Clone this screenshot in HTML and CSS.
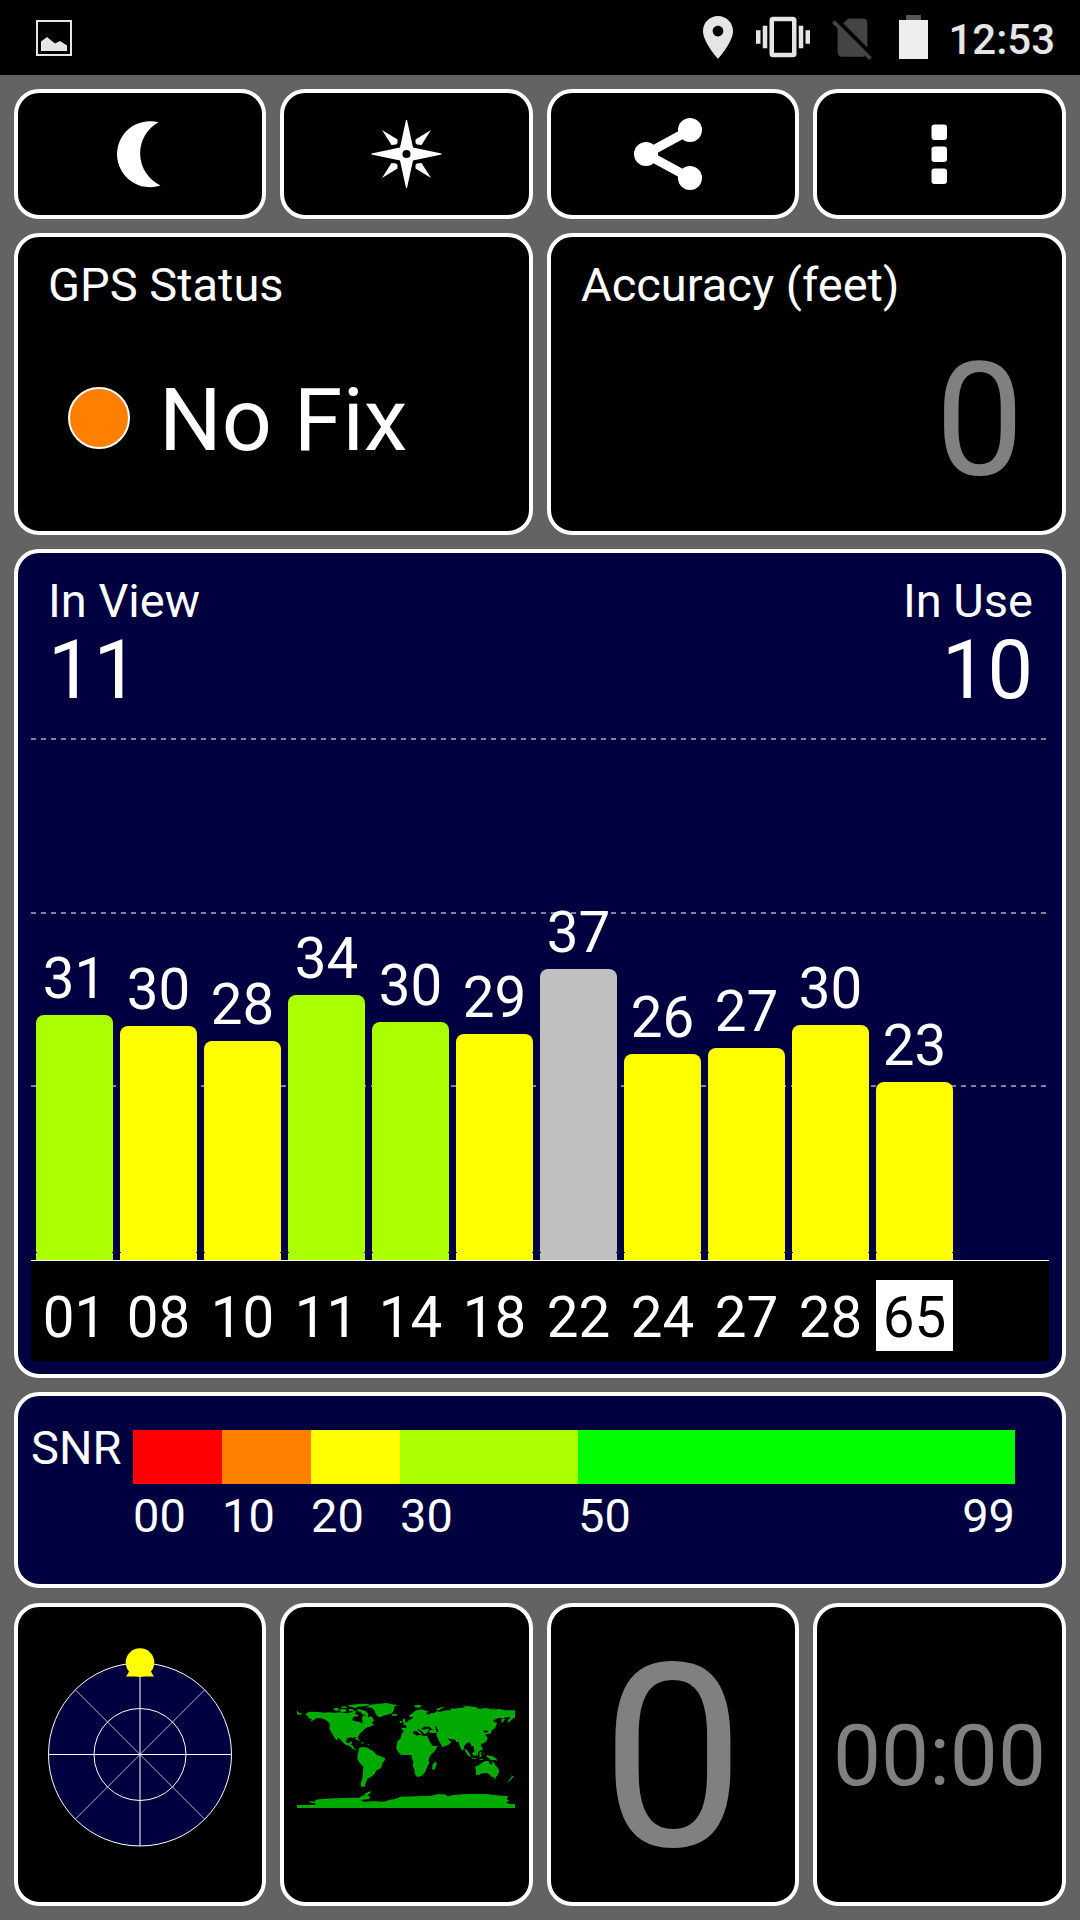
FILE: index.html
```html
<!DOCTYPE html>
<html lang="en">
<head>
    <meta charset="UTF-8">
    <meta name="viewport" content="width=device-width, initial-scale=1.0">
    <title>GPS Test</title>
    <link rel="stylesheet" href="styles.css">
</head>
<body>

    <div class="status-bar">
        <svg class="icon-image" viewBox="0 0 36 36">
            <path d="M1 1h34v34H1z" fill="none" stroke="#e5e5e5" stroke-width="2"/>
            <path d="M5 31V21.500L11 17L19 23.500L24 21L31 25.500V31z" fill="#e5e5e5"/>
        </svg>
        <div class="status-icons">
            <svg class="icon-pin" viewBox="5 2 14 20">
                <path d="M12 2C8.130 2 5 5.130 5 9c0 5.250 7 13 7 13s7-7.750 7-13c0-3.870-3.130-7-7-7zm0 9.500c-1.380 0-2.500-1.120-2.500-2.500s1.120-2.500 2.500-2.500 2.500 1.120 2.500 2.500-1.120 2.500-2.500 2.500z"/>
            </svg>
            <svg class="icon-vibrate" viewBox="0 0 24 24">
                <path d="M0 15h2V9H0v6zm3 2h2V7H3v10zm19-8v6h2V9h-2zm-3 8h2V7h-2v10zM16.500 3h-9C6.670 3 6 3.670 6 4.500v15c0 .83.67 1.500 1.500 1.500h9c.83 0 1.500-.67 1.500-1.500v-15c0-.83-.67-1.500-1.500-1.500zM16 19H8V5h8v14z"/>
            </svg>
            <svg class="icon-sim" viewBox="0 0 24 24">
                <path d="M18.990 5c0-1.100-.89-2-1.990-2h-7L7.660 5.340 19 16.680 18.990 5zM3.650 3.880L2.380 5.150 5 7.770V19c0 1.100.9 2 2 2h10.010c.35 0 .67-.1.96-.26l1.880 1.880 1.270-1.270L3.650 3.880z"/>
            </svg>
            <svg class="icon-battery" viewBox="0 0 29 44">
                <path d="M7 0h15v6H7z" fill="#555"/>
                <path d="M0 5h29v39H0z" fill="#eee"/>
            </svg>
            <span class="clock">12:53</span>
        </div>
    </div>

    <div class="screen">
        <!-- Toolbar -->
        <button class="panel tool">
            <svg viewBox="0 0 80 80">
                <path d="M58.500 8.300A33 33 0 1 0 60.500 71.500A35.500 35.500 0 0 1 58.500 8.300z"/>
            </svg>
        </button>
        <button class="panel tool">
            <svg viewBox="0 0 80 80">
                <path fill-rule="evenodd" d="M39 6h1L46 33.500L74.500 39.500v1L46 46.500L40 74h-1L33 46.500L4.500 40.500v-1L33 33.500zM39.500 36a4 4 0 1 0 0 8a4 4 0 1 0 0-8z"/>
                <path d="M15 16L30.500 25.500V29L29 30.500L24.500 31zM64 16L48.500 25.500V29L50 30.500L54.500 31zM15 64L30.500 54.500V51L29 49.500L24.500 49zM64 64L48.500 54.500V51L50 49.500L54.500 49z"/>
            </svg>
        </button>
        <button class="panel tool">
            <svg viewBox="0 0 80 80">
                <path d="M57 16L13 40L57 64" fill="none" stroke="#fff" stroke-width="9"/>
                <circle cx="57" cy="16" r="12"/>
                <circle cx="13" cy="40" r="12"/>
                <circle cx="57" cy="64" r="12"/>
            </svg>
        </button>
        <button class="panel tool">
            <svg viewBox="0 0 80 80">
                <rect x="31.500" y="10.500" width="15.500" height="15.500" rx="3"/>
                <rect x="31.500" y="32.500" width="15.500" height="15.500" rx="3"/>
                <rect x="31.500" y="54.500" width="15.500" height="15.500" rx="3"/>
            </svg>
        </button>

        <!-- Fix and accuracy -->
        <div class="panel half">
            <div class="label">GPS Status</div>
            <div class="fix">
                <span class="led"></span>
                <span class="fix-text">No Fix</span>
            </div>
        </div>
        <div class="panel half">
            <div class="label">Accuracy (feet)</div>
            <div class="accuracy">0</div>
        </div>

        <!-- Satellites -->
        <div class="panel full chart">
            <div class="counts">
                <div>
                    <div class="label">In View</div>
                    <div class="count">11</div>
                </div>
                <div class="right">
                    <div class="label">In Use</div>
                    <div class="count">10</div>
                </div>
            </div>
            <div class="plot">
                <div class="sat"><span>31</span><div class="bar lime" style="height: 245px"></div></div>
                <div class="sat"><span>30</span><div class="bar yellow" style="height: 234px"></div></div>
                <div class="sat"><span>28</span><div class="bar yellow" style="height: 219px"></div></div>
                <div class="sat"><span>34</span><div class="bar lime" style="height: 265px"></div></div>
                <div class="sat"><span>30</span><div class="bar lime" style="height: 238px"></div></div>
                <div class="sat"><span>29</span><div class="bar yellow" style="height: 226px"></div></div>
                <div class="sat"><span>37</span><div class="bar gray" style="height: 291px"></div></div>
                <div class="sat"><span>26</span><div class="bar yellow" style="height: 206px"></div></div>
                <div class="sat"><span>27</span><div class="bar yellow" style="height: 212px"></div></div>
                <div class="sat"><span>30</span><div class="bar yellow" style="height: 235px"></div></div>
                <div class="sat"><span>23</span><div class="bar yellow" style="height: 178px"></div></div>
            </div>
            <div class="ids">
                <span>01</span>
                <span>08</span>
                <span>10</span>
                <span>11</span>
                <span>14</span>
                <span>18</span>
                <span>22</span>
                <span>24</span>
                <span>27</span>
                <span>28</span>
                <span class="glonass">65</span>
            </div>
        </div>

        <!-- SNR legend -->
        <div class="panel full snr">
            <div class="snr-label">SNR</div>
            <div class="scale">
                <div class="step"><div class="swatch red"></div>00</div>
                <div class="step"><div class="swatch orange"></div>10</div>
                <div class="step"><div class="swatch yellow"></div>20</div>
                <div class="step"><div class="swatch lime"></div>30</div>
                <div class="step"><div class="swatch green"></div><div class="ends"><span>50</span><span>99</span></div></div>
            </div>
        </div>

        <!-- Page tiles -->
        <div class="panel tile">
            <svg class="sky" viewBox="0 0 200 221">
                <g fill="none" stroke="#fff">
                    <circle cx="100" cy="110.500" r="91.500" fill="#000040"/>
                    <circle cx="100" cy="110.500" r="46"/>
                    <path d="M8.500 110.500h183"/>
                    <path d="M100 19v183" stroke-opacity=".5" stroke-width="2"/>
                    <path d="M35.500 46L164.500 175M164.500 46L35.500 175" stroke-opacity=".7"/>
                </g>
                <circle cx="100" cy="18.500" r="14.300" fill="#ff0"/>
                <path d="M90 26L86 32.500h28L110 26z" fill="#ff0"/>
            </svg>
        </div>
        <div class="panel tile">
            <svg class="world" viewBox="51 69 654 315">
                <!-- Americas -->
                <path d="M51 91l4 6 13 4-8 3-9-1zM77 103l8-8 32 1 14 2 16-1 15 1 22-1 16 3 14-3 9-6 5 4-3 7 8 3-13 7-4 8 10 4 14 2 6 5 2-7-2-8 2-9 9-1 9 6 5-4 8 5 3 10-7 5-1 6 4 1-8 5-8 2-9 6-5 6-7 5-6 10-1 9-8-7-8 3-9-2-9 4-2 9 7 5 8-6 4 4-4 7 6 2 5 11 8 1-4 2-10-4-8-8-13-5-7-5-5-6-8-9-6 1 3 8-6-4-8-12-8-13-4-9 1-13-7-9-9-5-13-4-11 1-8 6-13 5 8-7-9-4z"/>
                <path d="M238 203L250 201L262 203L272 209L282 215L290 225L300 227L315 235L314 242L306 251L304 264L288 272L284 282L272 292L262 296L258 307L254 320L244 321L242 312L247 295L249 275L250 260L240 250L232 237L233 222z"/>
                <path d="M224 173l11 3 7 7-7-2-9-4zM243 186l11 3-9 2zM263 192h5v2h-5z"/>
                <!-- Canadian islands and Greenland -->
                <path d="M159 86l11-3 9 4-6 5-10-1zM177 90l12-4 11 3-2 6-15 1zM183 80l15-1 5 4-18 1zM205 76l30-4 25-1 12 3-13 4-24 2-10 5-8-4-12-2zM205 88l15-1-1 6-12 1zM230 88l10 0 18 5 7 9-1 8-8-4-11-5-2-5-10-2zM225 103l11 3-6 4-8-2zM274 127l6 5 1 5-8-2z"/>
                <path d="M258 82L272 74L290 72L320 69L336 73L353 75L343 80L341 92L336 100L320 104L308 108L300 112L292 109L286 100L283 90L274 83zM335 103l12-2 7 3-7 4-11-1zM401 77l14-3 12 3-5 3-5 4-10-2z"/>
                <!-- Europe and Asia -->
                <path d="M363 143l14 1 4-3-8-9 8-6 8-7 7-3 4-5-11 0-1-6 9-4 8-9 19-4 23 7-10 5 9 4 8-5 9 1 5-6 13 1 19-4 11 0 3-6 9 1 12-2 5 0 28-5 20 3 10 5 19-3 24 5 17-2 19 4 28 0 21 4v11l-18 3 7 1-15 5-11 10-7 4 3-9 6-8-7-1-16 4-13-1-15 7 1 4 10 3-3 11-6 9-12 3 4 9-7 2-5-10-12-1 3 6 8 3-5 4 7 10-3 9-9 7-9 2 3 9-1 9-10 6-4-7-4 2 7 10 2 8-10-9-3-10-1-12-6 1-5-11-6-1-12 11 0 8-5 7-7-12-4-16-7 1-3-7-14-2-10-3 10 11 3 1-10 9-14 5-4 1-5-10-7-12-2-6-4-7 2-8-11 1-13-1 1-7 12-3-9-3-6 6-3 7-8 5-8-8-10-8-4 1 11 10 4 6-8-3-9-8-8 0-6 5-2 7-11 2-5-2z"/>
                <path d="M369 116l5 0 3 11 5 5-14 3 4-6-4-3zM359 124l7-2-1 7-6 1zM468 88l16-6 13 0-14 4-9 6zM545 76l12 1 13 4-10 1zM633 86l16 0-10 3zM609 158l10 0 10-5 4-10 2-4 2 2-1 12-10 8-12 2zM632 124l5 9-1 6-3-6zM666 115l10 2-8 9-5 3zM661 128l-5 7-10 5 6-2z"/>
                <!-- Black and Caspian seas -->
                <path class="water" d="M424 146l8-6 16 0 6 6-14 1-12 2zM466 138l5 2-1 5 4 3 1 8-6-2-2-8z"/>
                <!-- Africa -->
                <path d="M367 157l10-1 22-1 2 7 11 5 6-3 15 4 8-1 5 11 7 13 5 7 12 0 3-1-7 14-11 12-7 8-2 10 2 9-6 8-5 15-6 9-6 6-13 3-7-8-2-15-4-11 1-13-4-8-2-10-8-2-10 1-13-1-8-7-6-11 1-14 3-8 9-9zM458 252l10-8 2 8-6 17-8-1z"/>
                <!-- South-east Asia and Oceania -->
                <path d="M553 205l8 6 8 10 4 10-8-4-8-10zM571 232l16 3 7 2-15-1zM576 219l6-3 10-9 4 5-4 12-11 4zM598 217l9-2-5 6 4 7-3 1-4 5zM597 189l5 2-1 8 7 5-1 9-8-6zM609 218l5 2-3 3zM620 224l9 3 10 2 10 7 3 6-9-2-11 1-7-8-5-3zM598 236l13 2-2 2-10-1z"/>
                <path d="M585 260L598 255L606 248L616 243L627 243L627 250L636 254L638 241L642 250L648 258L656 267L657 276L653 285L648 291L636 292L631 286L622 279L606 280L597 285L587 284L588 272zM641 291l7 1-4 7zM695 284l2 4 5 1-5 6-2 2-8 7-5 1 5-6 7-6z"/>
                <!-- Antarctica -->
                <path d="M51 375H103L108 370L96 369L84 362L103 365L108 359L125 357L160 355L190 354L215 353L238 353L246 347L257 345L251 342L272 333V339L262 346L269 348V357L242 360L254 366L272 364L290 364L312 365L330 359L345 357L362 350L410 349L455 347L470 343L495 343L503 349L520 345L560 342L590 341L625 343L650 346L685 349L680 358L688 362L678 368L690 372H705V384H51z"/>
            </svg>
        </div>
        <div class="panel tile speed">0</div>
        <div class="panel tile time">00:00</div>
    </div>

</body>
</html>
```
FILE: styles.css
```css
* {
    box-sizing: border-box;
}
body {
    margin: 0;
    height: 1920px;
    background-color: #636363;
    color: white;
    font-family: Roboto, sans-serif;
}
/* Android status bar */
.status-bar {
    display: flex;
    justify-content: space-between;
    height: 75px;
    padding: 0 25px 0 36px;
    background-color: black;
    fill: #e5e5e5;
}
.icon-image {
    width: 36px;
    height: 36px;
    margin-top: 20px;
}
.status-icons {
    display: flex;
    align-items: flex-start;
}
.icon-pin {
    width: 30px;
    height: 43px;
    margin: 16px 23px 0 0;
}
.icon-vibrate {
    width: 54px;
    height: 54px;
    margin: 10px 17px 0 0;
}
.icon-sim {
    width: 51px;
    height: 51px;
    margin: 12px 21px 0 0;
    fill: #444;
}
.icon-battery {
    width: 29px;
    height: 44px;
    margin: 15px 20px 0 0;
}
.clock {
    color: #e5e5e5;
    font-size: 42px;
    font-weight: 500;
    line-height: 80px;
}
/* Panels */
.screen {
    display: grid;
    grid-template-columns: 252px 253px 252px 253px;
    grid-template-rows: 130px 302px 829px 196px 303px;
    gap: 14px;
    padding: 14px;
}
.panel {
    min-width: 0;
    padding: 0;
    border: 4px solid white;
    border-radius: 25px;
    background-color: black;
    color: white;
    font-family: inherit;
}
.half {
    grid-column: span 2;
    padding: 20px 30px 0;
}
.full {
    grid-column: span 4;
    background-color: #000040;
}
.tool,
.tile {
    display: flex;
    align-items: center;
    justify-content: center;
}
.tile {
    margin-top: 1px;
    height: 303px;
}
.tool svg {
    width: 80px;
    height: 80px;
    fill: white;
}
.label {
    font-size: 47px;
    line-height: 56px;
}
.fix {
    display: flex;
    align-items: center;
    margin-top: 57px;
    padding-left: 20px;
}
.led {
    width: 62px;
    height: 62px;
    margin: 0 29px 4px 0;
    border: 2px solid white;
    border-radius: 50%;
    background-color: #ff8000;
}
.fix-text {
    font-size: 88px;
    line-height: 100px;
}
.accuracy {
    margin: 27px 8px 0 0;
    color: gray;
    font-size: 158px;
    line-height: 160px;
    text-align: right;
}
/* Satellite chart */
.chart {
    padding: 20px 13px 0;
}
.counts {
    display: flex;
    justify-content: space-between;
    height: 165px;
    padding: 0 16px 0 17px;
}
.right {
    text-align: right;
}
.count {
    font-size: 81px;
    line-height: 84px;
}
.plot {
    display: flex;
    align-items: flex-end;
    gap: 7px;
    height: 522px;
    padding-left: 5px;
    background-image:
        repeating-linear-gradient(90deg, #8080a0 0 5px, transparent 5px 10px),
        repeating-linear-gradient(90deg, #8080a0 0 5px, transparent 5px 10px),
        repeating-linear-gradient(90deg, #8080a0 0 5px, transparent 5px 10px);
    background-size: 100% 2px;
    background-position: 0 0, 0 174px, 0 347px;
    background-repeat: no-repeat;
}
.sat {
    width: 77px;
    font-size: 56.5px;
    line-height: 60px;
    text-align: center;
}
.bar {
    display: flex;
    align-items: flex-end;
    margin-top: 6px;
    border-radius: 8px 8px 0 0;
}
/* Small notch on both sides near the base line */
.bar::after {
    content: "";
    width: 100%;
    height: 1px;
    margin-bottom: 7px;
    border: solid #000040;
    border-width: 0 1px;
}
.ids {
    display: flex;
    gap: 7px;
    height: 101px;
    padding: 19px 0 10px 5px;
    border-top: 1px solid white;
    background-color: black;
    font-size: 56.5px;
    line-height: 76px;
    text-align: center;
}
.ids span {
    width: 77px;
}
.ids .glonass {
    background-color: white;
    color: black;
}
.red { background-color: #ff0000; }
.orange { background-color: #ff8000; }
.yellow { background-color: #ffff00; }
.lime { background-color: #aaff00; }
.green { background-color: #00ff00; }
.gray { background-color: #c0c0c0; }
/* SNR legend */
.snr {
    display: flex;
    padding: 34px 47px 0 13px;
    font-size: 47px;
}
.snr-label {
    width: 102px;
    line-height: 35px;
}
.scale {
    display: grid;
    flex: 1;
    grid-template-columns: 89px 89px 89px 178px 1fr;
    line-height: 63px;
}
.swatch {
    height: 54px;
}
.ends {
    display: flex;
    justify-content: space-between;
}
/* Bottom tiles */
.sky {
    width: 200px;
    height: 221px;
}
.world {
    width: 218px;
    height: 105px;
    margin: 2px 1px 0 0;
    fill: #00aa00;
}
.water {
    fill: black;
}
.speed,
.time {
    color: gray;
}
.speed {
    padding-top: 7px;
    font-size: 256px;
}
.time {
    padding-top: 2px;
    font-size: 85.5px;
}
```
